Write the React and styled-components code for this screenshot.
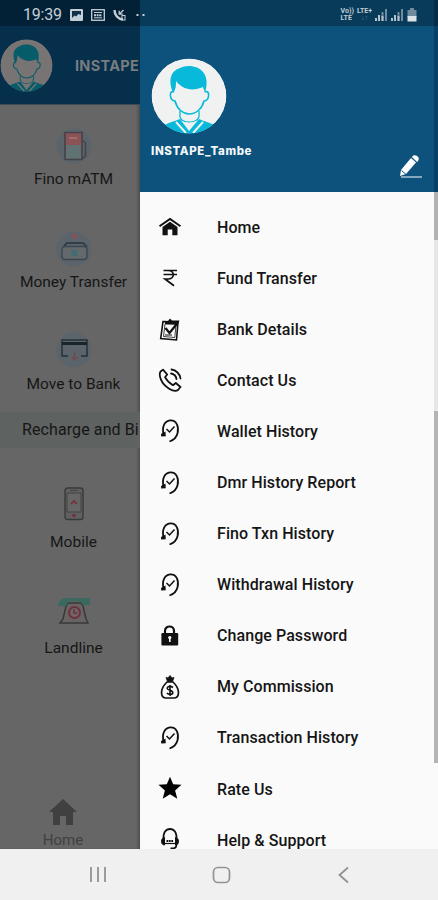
import React from "react";
import styled, { createGlobalStyle } from "styled-components";

const GlobalStyle = createGlobalStyle`
  * {
    box-sizing: border-box;
  }
  body {
    margin: 0;
    font-family: Roboto, "Noto Sans", sans-serif;
  }
`;

const Phone = styled.div`
  position: relative;
  display: flex;
  flex-direction: column;
  width: 438px;
  height: 900px;
  overflow: hidden;
  background: #fafafa;
`;

const StatusBar = styled.div`
  position: absolute;
  top: 0;
  left: 0;
  right: 0;
  z-index: 2;
  display: flex;
  align-items: center;
  justify-content: space-between;
  height: 26px;
  padding: 3px 21px 0 23px;
  background: rgba(0, 0, 0, 0.28);
  color: #c3ced5;
`;

const StatusGroup = styled.div`
  display: flex;
  align-items: center;
  gap: ${(props) => props.$gap}px;
`;

const Clock = styled.div`
  width: 39px;
  font-size: 16px;
  line-height: 20px;
  letter-spacing: -0.2px;
`;

const Network = styled.div`
  font-size: 7px;
  font-weight: 700;
  line-height: 7px;
  .dim {
    opacity: 0.4;
    text-align: center;
  }
`;

const Screen = styled.div`
  display: flex;
  height: 849px;
`;

const Backdrop = styled.div`
  display: flex;
  flex-direction: column;
  flex: 0 0 140px;
  overflow: hidden;
  background: #666;
  box-shadow: inset -3px 0 3px -1px rgba(0, 0, 0, 0.25);
`;

const PageHeader = styled.div`
  display: flex;
  align-items: center;
  gap: 22px;
  flex: 0 0 105px;
  padding: 26px 0 0;
  background: #052f4b;
  border-bottom: 1px solid #3d4d57;
`;

const Brand = styled.div`
  font-family: Inter, sans-serif;
  font-size: 14.5px;
  font-weight: 700;
  letter-spacing: 0.3px;
  color: #777c80;
`;

const Service = styled.div`
  display: flex;
  flex-direction: column;
  align-items: center;
  width: 147px;
  height: ${(props) => props.$height}px;
  padding-top: ${(props) => props.$top}px;
  font-size: 15.5px;
  line-height: 20px;
  color: #161616;
  white-space: nowrap;
  svg {
    margin-bottom: ${(props) => props.$gap}px;
  }
`;

const SectionTitle = styled.div`
  flex: 0 0 35px;
  padding-left: 22px;
  font-size: 16px;
  line-height: 36px;
  letter-spacing: 0.1px;
  color: #161616;
  background: #5e6261;
  white-space: nowrap;
`;

const BottomTab = styled.div`
  display: flex;
  flex-direction: column;
  align-items: center;
  width: 126px;
  margin-top: auto;
  color: #404040;
  font-size: 15px;
  line-height: 17px;
  svg {
    margin-top: -2px;
    margin-bottom: 7px;
  }
`;

const Drawer = styled.div`
  display: flex;
  flex-direction: column;
  flex: 0 0 294px;
  overflow: hidden;
  background: #fafafa;
`;

const DrawerHeader = styled.div`
  flex: 0 0 192px;
  padding: 58px 11px 0;
  background: #0c527d;
`;

const UserRow = styled.div`
  display: flex;
  justify-content: space-between;
`;

const UserName = styled.div`
  padding-top: 9px;
  font-family: Inter, sans-serif;
  font-size: 11.5px;
  font-weight: 800;
  line-height: 16px;
  letter-spacing: 0.6px;
  color: #f2f6f9;
`;

const EditIcon = styled.svg`
  margin-top: 16px;
`;

const Menu = styled.div`
  flex: 1;
  padding-top: 9.5px;
`;

const MenuItem = styled.div`
  display: flex;
  align-items: center;
  height: 51.1px;
  padding-left: 17px;
  font-size: 16px;
  font-weight: 500;
  letter-spacing: 0.07px;
  color: #151515;
  white-space: nowrap;
`;

const MenuIcon = styled.svg`
  flex: 0 0 26px;
  margin-right: 34px;
`;

const Edge = styled.div`
  display: flex;
  flex-direction: column;
  flex: 1;
`;

const EdgePart = styled.div`
  flex: 0 0 ${(props) => props.$height}px;
  background: ${(props) => props.$color};
`;

const NavBar = styled.div`
  display: flex;
  align-items: center;
  justify-content: space-between;
  flex: 1;
  padding: 0 85px 0 89px;
  background: #f0f0f0;
`;

const Avatar = ({ size, dim }) => {
  const skin = dim ? "#777473" : "#f0f2f2";
  const hair = dim ? "#075c69" : "#08b9d9";
  return (
    <svg width={size} height={size} viewBox="0 0 76 76" display="block">
      <clipPath id={`avatar${size}`}>
        <circle cx="38" cy="38" r="37.5" />
      </clipPath>
      <g clipPath={`url(#avatar${size})`}>
        <circle cx="38" cy="38" r="37.5" fill={skin} />
        <path d="M9 70 C15 65 22 64 29 61 L38 73 L48 61 C54 64 62 65 68 70 V76 H9Z" fill={hair} />
        <path
          d="M29 53 V59 C31 66 45 66 48 59 V53"
          fill={skin}
          stroke={hair}
          strokeWidth="1.3"
        />
        <path d="M30 62.5 L38 70 L46.5 62.5 C42 65 34 65 30 62.5Z" fill={skin} />
        <path d="M25 64 L35 75 M52 64 L42 75" stroke={skin} strokeWidth="2" />
        <path
          d="M23 34 C18 31 18 43 24 43 C26 51 32 56 38 56 C45 56 51 51 53 43 C59 43 59 31 54 34"
          fill={skin}
          stroke={hair}
          strokeWidth="1.6"
        />
        <path
          d="M22 35 C17 23 19 13 29 10 C36 6 48 8 52 14 C57 20 56 28 54 35 L52 29 C41 34 31 31 25 23 C25 28 25 31 22 35Z"
          fill={hair}
        />
      </g>
    </svg>
  );
};

const HistoryGlyph = () => (
  <g fill="none" stroke="#111" strokeWidth="1.8">
    <path d="M6.6 17 C4.5 8 8 3 13 2.4 C20 2 22 9 20.6 15 C19.7 19 17 22 12.5 23.5" />
    <path d="M9.5 11 L12.5 14 L17.5 8.5" strokeWidth="1.5" />
    <path d="M4 16 L8.5 13.5 L8.8 18.2 L4.2 18.5Z" fill="#111" stroke="none" />
  </g>
);

const glyphs = {
  home: (
    <g>
      <path d="M2.5 12.3 L13 5 L23.5 12.3" fill="none" stroke="#111" strokeWidth="2" />
      <path d="M13 7.8 L20.5 13 V21.2 H15.3 V15.5 H10.7 V21.2 H5.5 V13Z" fill="#111" />
    </g>
  ),
  rupee: (
    <path
      d="M6.5 5.5 H20 M6.5 9.5 H20 M7 5.5 H11 C18 5.5 18 14 11 14 H8 L17 20.8"
      fill="none"
      stroke="#111"
      strokeWidth="1.7"
    />
  ),
  bank: (
    <g fill="none" stroke="#111" strokeWidth="1.6">
      <path d="M6 5.5 L21 6 L19.5 24 L3.7 22.5Z" />
      <path d="M8 8 L19 8.5 L17.8 21.5 L6.5 20.5Z" strokeWidth="0.8" />
      <path d="M8 5 H11 L13 2.5 L15 4.5 H22.5 L21 8 H8Z" fill="#111" stroke="none" />
      <path d="M8.5 12 L12.5 17 L20.5 7" strokeWidth="2.2" />
      <path d="M8 19 H15" strokeWidth="1" />
    </g>
  ),
  phone: (
    <g fill="none" stroke="#111" strokeWidth="1.8" strokeLinecap="round" strokeLinejoin="round">
      <path d="M3.3 4.8 L6 2.6 L10.2 7.5 L8 10.2 C10 14 12 16 16 18.2 L18.8 16 L23.5 20 L21 23 C17 26 7 20 4 12.7 C2.5 9 2.2 7 3.3 4.8Z" />
      <path d="M14 6.5 C17 7 19 9 19.5 12 M14.5 2.5 C19 3 23 7 23.5 11.5" />
    </g>
  ),
  history: <HistoryGlyph />,
  lock: (
    <g>
      <path d="M8 12 V8 C8 2 17 2 17 8 V12" fill="none" stroke="#111" strokeWidth="2.2" />
      <rect x="4.4" y="10" width="16.8" height="12.5" rx="1.2" fill="#111" />
      <circle cx="12.8" cy="14.5" r="1.6" fill="#fafafa" />
      <path d="M12 15 H13.6 V19 H12Z" fill="#fafafa" />
    </g>
  ),
  bag: (
    <g fill="none" stroke="#111" strokeWidth="1.7">
      <path d="M10 8 C2.5 15 3.5 23.5 8.5 24 H17.5 C22.5 23.5 23.5 15 16 8Z" />
      <path d="M9 3.5 L11 4 L13 1.5 L15 4 L17 3.5 L15.5 7.5 H10.5Z" fill="#111" strokeWidth="0.8" />
      <path
        d="M16 13.5 C13 11.5 10 12.5 10.2 14.5 C10.5 16.5 15.8 16 15.8 18.5 C15.8 21 12 21 9.8 19.2 M13 11 V22"
        strokeWidth="1.6"
      />
    </g>
  ),
  star: (
    <path
      d="M13 .8 L16.2 8.2 L24.5 8.8 L18.1 14.4 L20.3 22.8 L13 18.3 L5.7 22.8 L7.9 14.4 L1.5 8.8 L9.8 8.2Z"
      fill="#000"
    />
  ),
  support: (
    <g fill="none" stroke="#111" strokeWidth="1.8">
      <path d="M6.5 13 C6 5 9 2 13 2 C17 2 20 5 19.5 13" />
      <path d="M7.5 10.5 V18 C3.5 18 3.5 11 7.5 10.5Z M18.5 10.5 V18 C22.5 18 22.5 11 18.5 10.5Z" fill="#111" strokeWidth="1" />
      <path d="M8 16.5 H18" strokeWidth="1.2" />
      <path d="M9.5 14 H16.5" strokeWidth="2" strokeDasharray="1.8 .6" />
      <path d="M19.5 17 C19.5 21 18 21.5 13.5 21.5" />
    </g>
  ),
};

const menuItems = [
  { icon: "home", label: "Home" },
  { icon: "rupee", label: "Fund Transfer" },
  { icon: "bank", label: "Bank Details" },
  { icon: "phone", label: "Contact Us" },
  { icon: "history", label: "Wallet History" },
  { icon: "history", label: "Dmr History Report" },
  { icon: "history", label: "Fino Txn History" },
  { icon: "history", label: "Withdrawal History" },
  { icon: "lock", label: "Change Password" },
  { icon: "bag", label: "My Commission" },
  { icon: "history", label: "Transaction History" },
  { icon: "star", label: "Rate Us" },
  { icon: "support", label: "Help & Support" },
];

const AtmIcon = () => (
  <svg width="36" height="36" viewBox="0 0 36 36">
    <circle cx="18" cy="18" r="17.5" fill="#5b646b" />
    <path d="M9 5 H26 V17 H9Z" fill="#8a5355" />
    <path d="M10 17 H25 V31 H10Z" fill="#607271" />
    <path d="M9 4.5 H26 V31.5 H9Z M26 12 L29.5 15 V28 L26 31" fill="none" stroke="#454349" strokeWidth="1.6" />
    <path d="M13 10 H21" stroke="#a36b6c" strokeWidth="2" />
  </svg>
);

const TransferIcon = () => (
  <svg width="36" height="36" viewBox="0 0 36 36">
    <circle cx="18" cy="18" r="17.5" fill="#5b646b" />
    <path d="M8 15 L11 12 H27 L31 16" fill="none" stroke="#343e46" strokeWidth="2" />
    <rect x="6" y="15.5" width="25" height="13" rx="3" fill="#64696b" stroke="#3c464e" strokeWidth="1.4" />
    <circle cx="18.5" cy="22" r="3.5" fill="#426c72" />
    <path d="M18.5 9 V4 M15.5 6 L18.5 3 L21.5 6" fill="none" stroke="#885058" strokeWidth="1.8" />
  </svg>
);

const BankIcon = () => (
  <svg width="36" height="36" viewBox="0 0 36 36">
    <circle cx="18" cy="18" r="17.5" fill="#5b646b" />
    <path d="M12 24 H6 V8 H31 V24 H25" fill="none" stroke="#262f37" strokeWidth="1.5" />
    <path d="M6 11.5 H31" stroke="#18232a" strokeWidth="3" />
    <path d="M18.5 19 V28 M15.5 25 L18.5 28 L21.5 25" fill="none" stroke="#75474f" strokeWidth="1.5" />
  </svg>
);

const MobileIcon = () => (
  <svg width="20" height="34" viewBox="0 0 20 34">
    <rect x="1" y="1" width="18" height="31.5" rx="2.5" fill="#606060" stroke="#393939" strokeWidth="1.4" />
    <path d="M3 6 H17 V25 H3Z" fill="#666" stroke="#424242" />
    <path d="M6 3.5 H14" stroke="#444" />
    <path d="M7 17 L10 14 L13 17" fill="none" stroke="#792e3b" strokeWidth="1.7" />
    <circle cx="10" cy="28.5" r="1.8" fill="#752d39" />
  </svg>
);

const LandlineIcon = () => (
  <svg width="34" height="28" viewBox="0 0 34 28">
    <path d="M9 9 L11 6 H24 L26 9 L29 22 L31 26 H3 L6 22Z" fill="#686464" stroke="#393939" strokeWidth="1.5" />
    <path d="M1 9 C2 0 9 1 17 1 H33 V8 H26 L23 4.5 H12 L9 9Z" fill="#3a6960" />
    <circle cx="17.5" cy="15.5" r="5.5" fill="#716366" stroke="#6e303c" strokeWidth="2" />
    <path d="M17 12 V16 H20" fill="none" stroke="#6e303c" strokeWidth="1.4" />
  </svg>
);

const Signal = () => (
  <svg width="13" height="13" viewBox="0 0 13 13">
    <path d="M1 10 V13 M4 7 V13" stroke="#b3c1ca" strokeWidth="2" />
    <path d="M7.5 4 V13 M11 1 V13" stroke="#6f8b9d" strokeWidth="2" />
    <path d="M7.5 8 V13" stroke="#b3c1ca" strokeWidth="2" />
  </svg>
);

const App = () => {
  return (
    <Phone>
      <GlobalStyle />
      <StatusBar>
        <StatusGroup $gap={8}>
          <Clock>19:39</Clock>
          <svg width="13" height="12" viewBox="0 0 13 12">
            <rect width="13" height="12" rx="1" fill="#c3ced5" />
            <path d="M2 2 H11 V6 L8.5 5 L6 7.5 L4.5 6.5 L2 9Z" fill="#12324a" />
          </svg>
          <svg width="14" height="12" viewBox="0 0 14 12" fill="none" stroke="#c3ced5">
            <rect x=".7" y=".7" width="12.6" height="10.6" strokeWidth="1.3" />
            <path d="M3 3.5 H11 M3 8.8 H11" />
            <path d="M3 6.2 H11" strokeWidth="2" strokeDasharray="2 .6" />
          </svg>
          <svg width="13" height="12" viewBox="0 0 13 12" fill="none" stroke="#c3ced5">
            <path d="M1.5 1 C1.5 6 5 10 10 10.5" strokeWidth="2.4" />
            <path d="M10.5 1 L6.5 5 M6.2 1.8 V5.2 H9.8" strokeWidth="1.3" />
            <rect x="9" y="6.5" width="3" height="4.5" strokeWidth="1" />
          </svg>
          <svg width="12" height="12" viewBox="0 0 12 12" fill="#c3ced5">
            <rect x="2.5" y="5" width="2" height="2" />
            <rect x="8.5" y="5" width="2" height="2" />
          </svg>
        </StatusGroup>
        <StatusGroup $gap={3}>
          <Network>
            <div>Vo))</div>
            <div>LTE</div>
          </Network>
          <Network>
            <div>LTE+</div>
            <div className="dim">↓↑</div>
          </Network>
          <Signal />
          <Signal />
          <svg width="10" height="14" viewBox="0 0 10 14">
            <path d="M3 0 H7 V2 H9.5 V9 H.5 V2 H3Z" fill="#6f8b9d" />
            <path d="M.5 8 H9.5 V13.5 H.5Z" fill="#dce3e7" />
          </svg>
        </StatusGroup>
      </StatusBar>
      <Screen>
        <Backdrop>
          <PageHeader>
            <Avatar size={53} dim />
            <Brand>INSTAPE</Brand>
          </PageHeader>
          <Service $top={23} $height={103} $gap={5}>
            <AtmIcon />
            Fino mATM
          </Service>
          <Service $top={23} $height={103} $gap={5}>
            <TransferIcon />
            Money Transfer
          </Service>
          <Service $top={21} $height={101} $gap={6}>
            <BankIcon />
            Move to Bank
          </Service>
          <SectionTitle>Recharge and Bi</SectionTitle>
          <Service $top={39} $height={104} $gap={11}>
            <MobileIcon />
            Mobile
          </Service>
          <Service $top={45} $height={110} $gap={13}>
            <LandlineIcon />
            Landline
          </Service>
          <BottomTab>
            <svg width="28" height="26" viewBox="0 0 28 26">
              <path d="M14 0 L28 13 H24 V26 H17 V17 H11 V26 H4 V13 H0Z" fill="#404040" />
            </svg>
            Home
          </BottomTab>
        </Backdrop>
        <Drawer>
          <DrawerHeader>
            <Avatar size={76} />
            <UserRow>
              <UserName>INSTAPE_Tambe</UserName>
              <EditIcon width="26" height="30" viewBox="0 0 26 30">
                <path d="M4 20 L14 8 L19 12.5 L9 24 L3 26Z" fill="#fff" />
                <path d="M15 7 C17 3 24 7 21 11 L20 12Z" fill="#fff" />
                <path d="M4.5 20.5 L8.8 24.2" stroke="#0c527d" />
                <path d="M4 27 H25" stroke="#c6d6e0" strokeWidth="1.3" />
              </EditIcon>
            </UserRow>
          </DrawerHeader>
          <Menu>
            {menuItems.map((item) => (
              <MenuItem key={item.label}>
                <MenuIcon width="26" height="26" viewBox="0 0 26 26">
                  {glyphs[item.icon]}
                </MenuIcon>
                {item.label}
              </MenuItem>
            ))}
          </Menu>
        </Drawer>
        <Edge>
          <EdgePart $height={26} $color="#0a3d60" />
          <EdgePart $height={166} $color="#083f63" />
          <EdgePart $height={48} $color="#b2b2b2" />
          <EdgePart $height={171} $color="#e6e6e6" />
          <EdgePart $height={352} $color="#b4b4b4" />
        </Edge>
      </Screen>
      <NavBar>
        <svg width="18" height="17" viewBox="0 0 18 17">
          <path d="M2 1 V16 M9 1 V16 M16 1 V16" stroke="#929292" strokeWidth="1.8" />
        </svg>
        <svg width="19" height="18" viewBox="0 0 19 18">
          <rect x="1.5" y="1.5" width="16" height="15" rx="4.5" fill="none" stroke="#929292" strokeWidth="1.7" />
        </svg>
        <svg width="18" height="18" viewBox="0 0 18 18">
          <path d="M13 1.5 L4.5 9 L13 16.5" fill="none" stroke="#929292" strokeWidth="1.8" />
        </svg>
      </NavBar>
    </Phone>
  );
};

export default App;
